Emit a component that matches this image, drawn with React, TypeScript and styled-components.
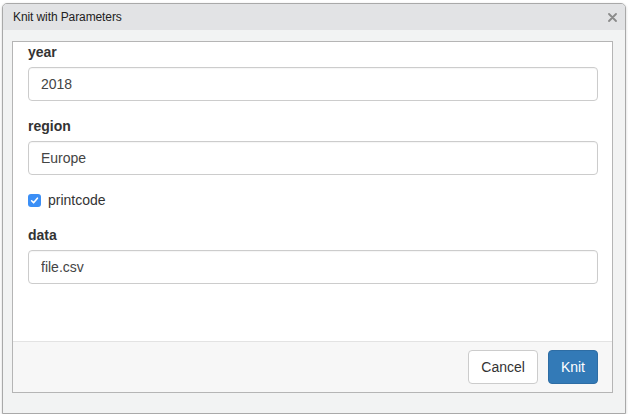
import React from "react";
import styled, { createGlobalStyle } from "styled-components";

const Global = createGlobalStyle`
  html, body { margin: 0; padding: 0; background: #ffffff; }
  * { box-sizing: border-box; }
  body { font-family: "Liberation Sans", Arial, Helvetica, sans-serif; }
`;

const Page = styled.div`
  padding: 3px 2px 0 2px;
`;

const Window = styled.div`
  width: 624px;
  height: 411px;
  border: 1px solid #a9a9a9;
  border-radius: 5px 5px 0 0;
  background: #f2f3f3;
  box-shadow: 0 1px 3px rgba(0, 0, 0, 0.18);
  display: flex;
  flex-direction: column;
  overflow: hidden;
`;

const TitleBar = styled.div`
  height: 26px;
  flex: none;
  background: #e2e3e5;
  display: flex;
  align-items: center;
  justify-content: space-between;
  padding: 0 6px 0 10px;
`;

const Title = styled.span`
  font-size: 12px;
  color: #222;
  letter-spacing: -0.1px;
`;

const Close = styled.button`
  border: 0;
  background: none;
  padding: 0;
  width: 14px;
  height: 14px;
  display: flex;
  align-items: center;
  justify-content: center;
  cursor: pointer;
`;

const Body = styled.div`
  flex: 1;
  display: flex;
  padding: 11px 12px 20px 9px;
`;

const Panel = styled.div`
  flex: 1;
  display: flex;
  flex-direction: column;
  border: 1px solid #b5b5b5;
  background: #ffffff;
`;

const Content = styled.div`
  flex: 1;
  padding: 0 14px 0 15px;
`;

const Group = styled.div`
  margin-bottom: 15px;
`;

const Label = styled.label`
  display: block;
  font-size: 14px;
  line-height: 20px;
  font-weight: bold;
  color: #333;
  margin-bottom: 5px;
`;

const Input = styled.input`
  display: block;
  width: 100%;
  height: 34px;
  padding: 6px 12px;
  font-family: inherit;
  font-size: 14px;
  color: #444;
  border: 1px solid #ccc;
  border-radius: 4px;
  background: #fff;
  box-shadow: inset 0 1px 1px rgba(0, 0, 0, 0.04);
  outline: none;
`;

const CheckRow = styled.label`
  display: flex;
  align-items: center;
  height: 20px;
  margin-bottom: 15px;
  font-size: 14px;
  color: #333;
  gap: 7px;
`;

const Box = styled.span`
  width: 13px;
  height: 13px;
  border-radius: 3px;
  background: #3b8ff6;
  display: flex;
  align-items: center;
  justify-content: center;
  margin-top: 1px;
`;

const Footer = styled.div`
  flex: none;
  display: flex;
  justify-content: flex-end;
  gap: 10px;
  padding: 8px 14px 8px 15px;
  border-top: 1px solid #e3e3e3;
  background: #f7f7f7;
`;

const Button = styled.button<{ $primary?: boolean }>`
  height: 34px;
  padding: 6px 12px;
  font-family: inherit;
  font-size: 14px;
  border-radius: 4px;
  border: 1px solid ${(p) => (p.$primary ? "#2e6da4" : "#ccc")};
  background: ${(p) => (p.$primary ? "#337ab7" : "#fff")};
  color: ${(p) => (p.$primary ? "#fff" : "#333")};
  cursor: pointer;
`;

export default function App() {
  return (
    <Page>
      <Global />
      <Window>
        <TitleBar>
          <Title>Knit with Parameters</Title>
          <Close aria-label="Close">
            <svg width="9" height="9" viewBox="0 0 9 9">
              <path d="M1 1L8 8M8 1L1 8" stroke="#8a8a8a" strokeWidth="1.8" strokeLinecap="round" />
            </svg>
          </Close>
        </TitleBar>
        <Body>
          <Panel>
            <Content>
              <Group>
                <Label>year</Label>
                <Input defaultValue="2018" />
              </Group>
              <Group>
                <Label>region</Label>
                <Input defaultValue="Europe" />
              </Group>
              <CheckRow>
                <Box>
                  <svg width="9" height="9" viewBox="0 0 9 9">
                    <path d="M1.6 4.8L3.6 6.8L7.4 2.2" fill="none" stroke="#fff" strokeWidth="1.6" strokeLinecap="round" strokeLinejoin="round" />
                  </svg>
                </Box>
                printcode
              </CheckRow>
              <Group>
                <Label>data</Label>
                <Input defaultValue="file.csv" />
              </Group>
            </Content>
            <Footer>
              <Button>Cancel</Button>
              <Button $primary>Knit</Button>
            </Footer>
          </Panel>
        </Body>
      </Window>
    </Page>
  );
}
